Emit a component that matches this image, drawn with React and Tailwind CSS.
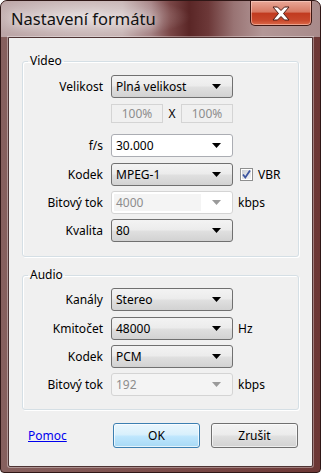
import React from 'react';

function Arrow({ color = '#000' }) {
  return (
    <svg width="9" height="5" viewBox="0 0 9 5">
      <path d="M0 0 H9 L4.5 5 Z" fill={color} />
    </svg>
  );
}

function Combo({ value, kind = 'ro' }) {
  const styles = {
    ro: 'border-[#707070] bg-[linear-gradient(#f3f3f3,#ececec_45%,#dfdfdf_55%,#d2d2d2)] text-black',
    edit: 'border-[#abadb3] bg-white text-black',
    off: 'border-[#d4d4d4] bg-white text-[#8d8d8d]',
    offGrey: 'border-[#d4d4d4] bg-[#f4f4f4] text-[#8d8d8d]',
  };
  const dim = kind === 'off' || kind === 'offGrey';
  return (
    <div className={`flex h-[23px] w-[122px] items-center rounded-[3px] border ${styles[kind]}`}>
      <div className={`ml-[2px] flex h-[17px] flex-1 items-center pl-[2px] ${kind === 'off' ? 'bg-[#f4f4f4]' : ''}`}>
        {value}
      </div>
      <div className="flex w-[31px] justify-center">
        <Arrow color={dim ? '#9a9a9a' : '#000'} />
      </div>
    </div>
  );
}

function Row({ label, children, className = '' }) {
  return (
    <div className={`flex h-[23px] items-center ${className}`}>
      <div className="w-[80px] text-right">{label}</div>
      <div className="ml-[8px] flex items-center">{children}</div>
    </div>
  );
}

function Group({ title, children, className = '' }) {
  return (
    <fieldset className={`mx-[13px] rounded-[3px] border border-[#d5dfe5] shadow-[inset_1px_1px_0_#fff,1px_1px_0_#fff] ${className}`}>
      <legend className="ml-[5px] px-[2px] leading-[16px]">{title}</legend>
      {children}
    </fieldset>
  );
}

export default function App() {
  return (
    <div className="h-[473px] w-[321px] bg-white">
      <div className="flex h-[473px] w-[321px] flex-col overflow-hidden rounded-t-[7px] rounded-b-[4px] border border-[#2f1716] bg-[linear-gradient(90deg,#86605e,#7a4b49_50%,#6c3735)] font-['Noto_Sans',sans-serif] text-[12px] text-black">
        <div className="flex h-[36px] items-start justify-between bg-[radial-gradient(ellipse_110px_22px_at_80px_16px,rgba(255,255,255,0.55),transparent),linear-gradient(90deg,#bca6a7_0%,#c4b0b0_38%,#a68385_47%,#7a4747_53%,#5a2626_59%,#6c3838_65%,#997474_73%,#b39797_82%,#a88a8a_100%)]">
          <div className="pl-[10px] pt-[8px] text-[16.5px] leading-[20px] text-[#111] [text-shadow:0_0_8px_rgba(255,255,255,0.9)]">
            Nastavení formátu
          </div>
          <div className="mr-[8px] flex h-[25px] w-[62px] items-center justify-center rounded-b-[5px] border border-t-0 border-[#3f1712] bg-[linear-gradient(#e9a898,#d77a64_45%,#c13b20_52%,#c8472b_80%,#db6a4a)] shadow-[inset_0_0_0_1px_rgba(255,220,210,0.5)]">
            <svg width="18" height="15" viewBox="0 0 18 15">
              <polygon
                points="1,1 5.5,1 9,4.5 12.5,1 17,1 11.5,7.5 17,14 12.5,14 9,10.5 5.5,14 1,14 6.5,7.5"
                fill="#fff"
                stroke="#4a1d17"
                strokeWidth="1"
                strokeLinejoin="round"
              />
            </svg>
          </div>
        </div>

        <div className="mx-[7px] mb-[5px] flex flex-1 flex-col rounded-b-[2px] border border-[#4e3434] bg-[#f0f0f0] shadow-[0_0_0_1px_rgba(255,255,255,0.35)]">
          <Group title="Video" className="mt-[15px] pb-[14px]">
            <Row label="Velikost" className="mt-[6px]">
              <Combo value="Plná velikost" />
            </Row>
            <div className="ml-[88px] mt-[6px] flex h-[19px] items-center text-[#8d8d8d]">
              <div className="flex h-[19px] w-[52px] items-center justify-center border border-[#d4d4d4]">100%</div>
              <div className="w-[18px] text-center text-black">X</div>
              <div className="flex h-[19px] w-[52px] items-center justify-center border border-[#d4d4d4]">100%</div>
            </div>
            <Row label="f/s" className="mt-[11px]">
              <Combo value="30.000" kind="edit" />
            </Row>
            <Row label="Kodek" className="mt-[6px]">
              <Combo value="MPEG-1" />
              <div className="ml-[7px] flex items-center">
                <svg width="13" height="13" viewBox="0 0 13 13">
                  <defs>
                    <linearGradient id="cb" x1="0" y1="0" x2="1" y2="1">
                      <stop offset="0" stopColor="#cbcfd5" />
                      <stop offset="1" stopColor="#f6f6f6" />
                    </linearGradient>
                  </defs>
                  <rect x="0.5" y="0.5" width="12" height="12" fill="#fff" stroke="#8e8f8f" />
                  <rect x="2" y="2" width="9" height="9" fill="url(#cb)" />
                  <path d="M3 6.5 L5.3 9.5 L10 2.5" fill="none" stroke="#3c55a0" strokeWidth="1.8" />
                </svg>
                <span className="ml-[5px]">VBR</span>
              </div>
            </Row>
            <Row label={<span className="text-black">Bitový tok</span>} className="mt-[5px]">
              <Combo value="4000" kind="off" />
              <span className="ml-[5px]">kbps</span>
            </Row>
            <Row label="Kvalita" className="mt-[5px]">
              <Combo value="80" />
            </Row>
          </Group>

          <Group title="Audio" className="mt-[10px] pb-[13px]">
            <Row label="Kanály" className="mt-[5px]">
              <Combo value="Stereo" />
            </Row>
            <Row label="Kmitočet" className="mt-[6px]">
              <Combo value="48000" />
              <span className="ml-[5px]">Hz</span>
            </Row>
            <Row label="Kodek" className="mt-[5px]">
              <Combo value="PCM" />
            </Row>
            <Row label="Bitový tok" className="mt-[5px]">
              <Combo value="192" kind="offGrey" />
              <span className="ml-[5px]">kbps</span>
            </Row>
          </Group>

          <div className="mt-[13px] flex h-[25px] items-center">
            <div className="w-[104px] pl-[19px]">
              <span className="text-[#0000ee] underline">Pomoc</span>
            </div>
            <button className="flex h-[25px] w-[87px] items-center justify-center rounded-[3px] border border-[#3c7fb1] bg-[linear-gradient(#eaf6fd,#d9f0fc_45%,#bee6fd_55%,#a7d9f5)] shadow-[inset_0_0_0_1px_rgba(255,255,255,0.7)]">
              OK
            </button>
            <button className="ml-[11px] flex h-[25px] w-[87px] items-center justify-center rounded-[3px] border border-[#707070] bg-[linear-gradient(#f3f3f3,#ececec_45%,#dfdfdf_55%,#d2d2d2)] shadow-[inset_0_0_0_1px_rgba(255,255,255,0.6)]">
              Zrušit
            </button>
          </div>
        </div>
      </div>
    </div>
  );
}
